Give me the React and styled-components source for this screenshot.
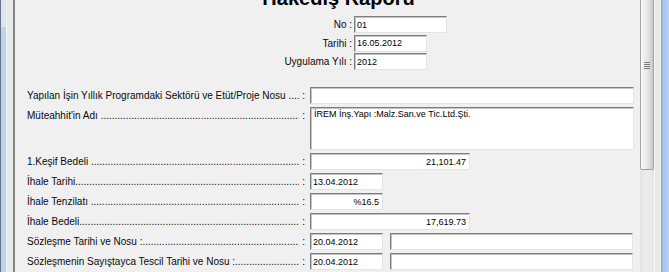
import React from "react";
import styled, { createGlobalStyle } from "styled-components";

const Global = createGlobalStyle`
  html, body {
    margin: 0;
    padding: 0;
    background: #f0f0f0;
    overflow: hidden;
  }
`;

const Window = styled.div`
  display: flex;
  width: 669px;
  height: 272px;
  overflow: hidden;
  background: #f0f0f0;
`;

const FrameEdge = styled.div`
  flex: none;
  width: ${(p) => (p.$right ? 7 : 6)}px;
  border-left: 1px solid ${(p) => (p.$right ? "#86a3c6" : "#66768a")};
  background: ${(p) =>
    p.$right
      ? "linear-gradient(to right, #9fc0e8, #b8d3f1)"
      : "linear-gradient(#dfe5ec 0 27px, #bed4ec 27px)"};
  box-shadow: ${(p) => (p.$right ? "none" : "inset -1px 0 #eef3f8")};
`;

const Gutter = styled.div`
  flex: none;
  width: 6px;
  background: #e9e9e9;
  box-shadow: ${(p) => (p.$right ? "inset -1px 0 #f6f6f6" : "none")};
`;

const Viewport = styled.div`
  flex: none;
  display: flex;
  width: 639px;
  border-left: 2px solid #858585;
  border-right: 1px solid #f7f7f7;
  background: #f0f0f0;
`;

const Content = styled.div`
  flex: 1;
  min-width: 0;
  padding-left: 12px;
  font-family: "Liberation Sans", Arial, sans-serif;
  font-size: 10px;
  color: #0a0a0a;
`;

const Title = styled.h1`
  margin: -13px 0 0;
  padding-left: 10px;
  font-size: 20px;
  line-height: 23px;
  font-weight: bold;
  text-align: center;
  color: #000;
`;

const Header = styled.div`
  display: flex;
  flex-direction: column;
  gap: 1.5px;
  margin-top: 6px;
`;

const HeadRow = styled.div`
  display: flex;
  align-items: center;
  gap: 2px;
  height: 17px;
`;

const HeadLabel = styled.span`
  width: 325px;
  text-align: right;
  white-space: pre;
`;

const Rows = styled.div`
  display: flex;
  flex-direction: column;
  gap: 3px;
  margin-top: 17px;
`;

const Row = styled.div`
  display: grid;
  grid-template-columns: 280px auto;
  column-gap: 3px;
  align-items: start;
`;

const Label = styled.div`
  display: flex;
  line-height: 17px;
  white-space: pre;
  padding-right: 2px;
`;

const Leader = styled.span`
  flex: 1;
  min-width: 0;
  overflow: hidden;

  &::before {
    content: "........................................................................................................................";
  }
`;

const Fields = styled.div`
  display: flex;
  gap: 7px;
`;

const Field = styled.input`
  box-sizing: border-box;
  width: ${(p) => p.$w}px;
  height: 17px;
  margin: 0;
  padding: 0 ${(p) => (p.$right ? 3 : 1)}px 0 2px;
  border: 1px solid;
  border-color: #7d7d7d #e4e4e4 #e4e4e4 #7d7d7d;
  box-shadow: inset 1px 1px 0 #c4c4c4;
  background: #fff;
  font-family: "Liberation Sans", Arial, sans-serif;
  font-size: 9px;
  color: #000;
  text-align: ${(p) => (p.$right ? "right" : "left")};
  outline: none;
`;

const Memo = styled.textarea`
  box-sizing: border-box;
  display: block;
  width: 324px;
  height: 43px;
  margin: 0;
  padding: 1px 3px;
  border: 1px solid;
  border-color: #7d7d7d #e4e4e4 #e4e4e4 #7d7d7d;
  box-shadow: inset 1px 1px 0 #c4c4c4;
  background: #fff;
  font-family: "Liberation Sans", Arial, sans-serif;
  font-size: 9px;
  line-height: 10px;
  color: #000;
  resize: none;
  overflow: hidden;
  outline: none;
`;

const ScrollBar = styled.div`
  flex: none;
  position: relative;
  width: 14px;
  background: linear-gradient(to right, #e2e2e2, #ededed 40%, #e6e6e6);
`;

const Thumb = styled.div`
  position: absolute;
  top: -43px;
  left: 0;
  right: 0;
  height: 213px;
  box-sizing: border-box;
  border: 1px solid #a3a3a3;
  border-top: none;
  border-radius: 0 0 2px 2px;
  background: linear-gradient(to right, #f7f7f7, #e9e9e9 45%, #d6d6d6 80%, #c6c6c6);
  box-shadow: inset 1px 0 #fdfdfd;
`;

const Grip = styled.div`
  position: absolute;
  left: 3px;
  top: 105px;
  width: 6px;
  height: 7px;
  background: repeating-linear-gradient(#7a7a7a 0 1px, transparent 1px 2px);
`;

const header = [
  { label: "No :", value: "01", w: 93 },
  { label: "Tarihi :", value: "16.05.2012", w: 73 },
  { label: "Uygulama Yılı :", value: "2012", w: 73 },
];

const rows = [
  { label: "1.Keşif Bedeli ", fields: [{ w: 160, value: "21,101.47", right: true }] },
  { label: "İhale Tarihi", fields: [{ w: 73, value: "13.04.2012" }] },
  { label: "İhale Tenzilatı ", fields: [{ w: 73, value: "%16.5", right: true }] },
  { label: "İhale Bedeli", fields: [{ w: 160, value: "17,619.73", right: true }] },
  {
    label: "Sözleşme Tarihi ve Nosu :",
    fields: [{ w: 73, value: "20.04.2012" }, { w: 243, value: "" }],
  },
  {
    label: "Sözleşmenin Sayıştayca Tescil Tarihi ve Nosu :",
    fields: [{ w: 73, value: "20.04.2012" }, { w: 243, value: "" }],
  },
];

const Dotted = ({ children }) => (
  <Label>
    {children}
    <Leader />
    {" :"}
  </Label>
);

export default function App() {
  return (
    <>
      <Global />
      <Window>
        <FrameEdge />
        <Gutter />
        <Viewport>
          <Content>
            <Title>Hakediş Raporu</Title>
            <Header>
              {header.map((h) => (
                <HeadRow key={h.label}>
                  <HeadLabel>{h.label}</HeadLabel>
                  <Field $w={h.w} readOnly value={h.value} />
                </HeadRow>
              ))}
            </Header>
            <Rows>
              <Row>
                <Dotted>Yapılan İşin Yıllık Programdaki Sektörü ve Etüt/Proje Nosu </Dotted>
                <Field $w={324} readOnly value="" />
              </Row>
              <Row>
                <Dotted>Müteahhit'in Adı </Dotted>
                <Memo readOnly value="İREM İnş.Yapı :Malz.San.ve Tic.Ltd.Şti." />
              </Row>
              {rows.map((r) => (
                <Row key={r.label}>
                  <Dotted>{r.label}</Dotted>
                  <Fields>
                    {r.fields.map((f, i) => (
                      <Field key={i} $w={f.w} $right={f.right} readOnly value={f.value} />
                    ))}
                  </Fields>
                </Row>
              ))}
            </Rows>
          </Content>
          <ScrollBar>
            <Thumb>
              <Grip />
            </Thumb>
          </ScrollBar>
        </Viewport>
        <Gutter $right />
        <FrameEdge $right />
      </Window>
    </>
  );
}
